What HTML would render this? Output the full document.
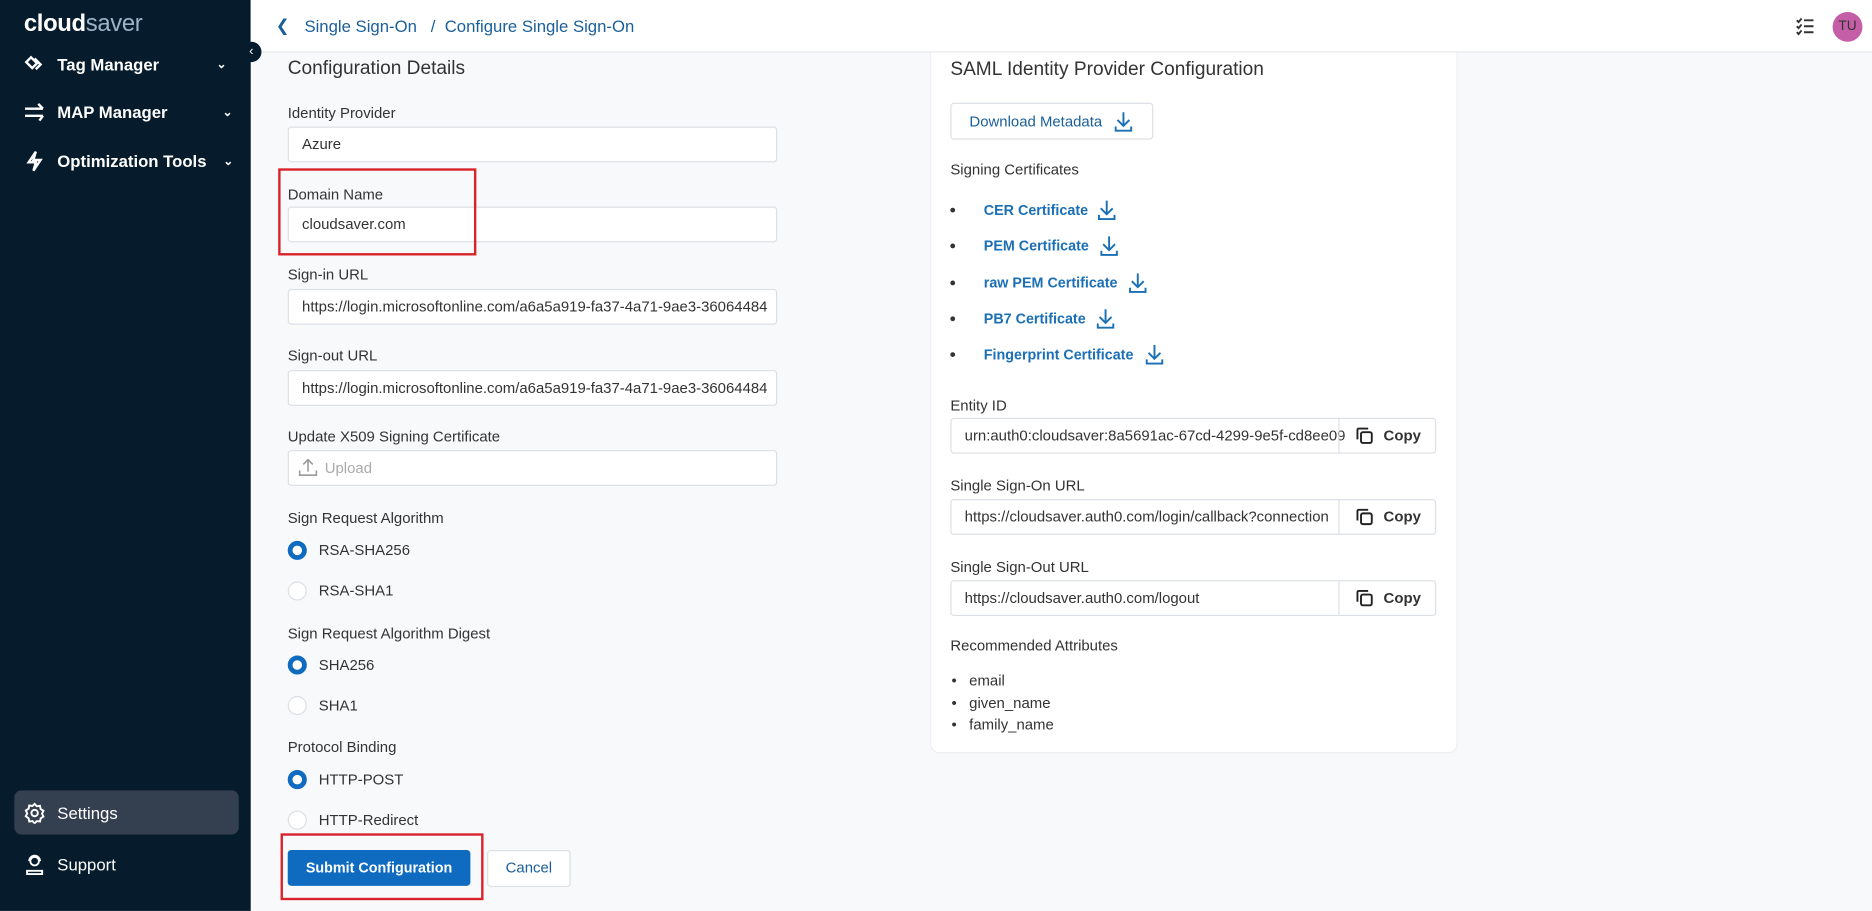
<!DOCTYPE html>
<html><head><meta charset="utf-8"><style>
*{box-sizing:border-box;margin:0;padding:0}
html,body{width:1872px;height:910px;overflow:hidden;background:#f8f9fb}
#w{position:absolute;left:0;top:0;width:1568px;height:763px;transform:scale(1.19388);transform-origin:0 0;font-family:"Liberation Sans",sans-serif;color:#333;background:#f8f9fb}
.a{position:absolute}
.sb{left:0;top:0;width:210px;height:763px;background:#061c2c;color:#fff}
.nav{position:absolute;left:20px;font-size:14px;font-weight:bold;display:flex;align-items:center;gap:10px}
.hdr{left:210px;top:0;width:1358px;height:44px;background:#fff;border-bottom:1px solid #e6e8ec}
.lbl{position:absolute;font-size:12.5px;color:#333}
.inp{position:absolute;height:30px;background:#fff;border:1px solid #dcdfe4;border-radius:3px;font-size:12.5px;color:#333;padding:0 11px;line-height:28px;white-space:nowrap;overflow:hidden}
.rad{position:absolute;left:241px;font-size:12.5px;display:flex;align-items:center;gap:10px}
.rad i{display:inline-block;width:16px;height:16px;border-radius:50%;border:1px solid #dcdfe4;background:#fff}
.rad i.on{border:4.5px solid #0e6bbf}
.card{left:779px;top:44px;width:442px;height:587px;background:#fff;border:1px solid #eceef1;border-top:none;border-radius:0 0 8px 8px}
.lnk{color:#1a6fb5;font-size:12px;font-weight:bold}
.cert{position:absolute;left:796px;display:flex;align-items:center;font-size:12.5px}
.cert b.dot{width:4px;height:4px;border-radius:50%;background:#333;margin-right:24px;display:inline-block}
.cp{position:absolute;left:1121px;width:82px;height:30px;border-left:1px solid #dcdfe4;display:flex;align-items:center;justify-content:center;gap:8px;font-size:12.5px;font-weight:bold;color:#333}
</style></head><body><div id="w">
<div class="a sb">
 <div class="a" style="left:20px;top:9px;font-size:20px;letter-spacing:-0.3px"><b>cloud</b><span style="color:#9fb3c8;font-weight:normal">saver</span></div>
 <div class="nav" style="top:46px"><svg width="18" height="16" viewBox="0 0 18 16" fill="none" stroke="#fff" stroke-width="2"><path d="M2 6l4-4 5 5-4 4z"/><path d="M9 3l5 5-4 4"/></svg>Tag Manager<span style="margin-left:38px;font-size:10px">&#8964;</span></div>
 <div class="nav" style="top:86px"><svg width="18" height="16" viewBox="0 0 18 16" fill="none" stroke="#fff" stroke-width="2"><path d="M1 5h15M12 1l4 4M1 11h15M13 15l3-4"/></svg>MAP Manager<span style="margin-left:36px;font-size:10px">&#8964;</span></div>
 <div class="nav" style="top:126px"><svg width="18" height="18" viewBox="0 0 18 18" fill="none" stroke="#fff" stroke-width="2"><path d="M10 1L4 10h6l-2 7 6-9H8z"/></svg>Optimization Tools<span style="margin-left:4px;font-size:10px">&#8964;</span></div>
 <div class="a" style="left:12px;top:662px;width:188px;height:37px;background:#343f50;border-radius:6px"></div>
 <div class="nav" style="top:672px;font-weight:normal"><svg width="18" height="18" viewBox="0 0 20 20" fill="none" stroke="#fff" stroke-width="1.8"><circle cx="10" cy="10" r="3"/><path d="M10 1.5l2 2.2 3-.4.6 3 2.6 1.6-1.3 2.7 1.3 2.7-2.6 1.6-.6 3-3-.4-2 2.2-2-2.2-3 .4-.6-3L1.8 13l1.3-2.7L1.8 7.6l2.6-1.6.6-3 3 .4z"/></svg>Settings</div>
 <div class="nav" style="top:715px;font-weight:normal"><svg width="18" height="18" viewBox="0 0 20 20" fill="none" stroke="#fff" stroke-width="1.8"><circle cx="10" cy="7" r="4"/><path d="M3 19v-3h14v3zM5 7a5 5 0 0110 0"/></svg>Support</div>
</div>
<div class="a hdr">
 <div class="a" style="left:21px;top:13px;font-size:14px;color:#1a5f99">&#10094;</div>
 <div class="a" style="left:45px;top:14px;font-size:14px;color:#1a5f99">Single Sign-On &nbsp; / &nbsp;Configure Single Sign-On</div>
 <svg class="a" style="left:1294px;top:14px" width="16" height="16" viewBox="0 0 16 16" fill="none" stroke="#333" stroke-width="1.6"><path d="M1 3l1.5 1.5L5 1.5M1 8l1.5 1.5L5 6.5M1 13l1.5 1.5L5 11.5M7 3h8M7 8h8M7 13h8"/></svg>
 <div class="a" style="left:1325px;top:10px;width:25px;height:25px;border-radius:50%;background:#c45ea6;color:#333;font-size:11.5px;text-align:center;line-height:25px">TU</div>
</div>
<div class="a" style="left:202px;top:35px;width:17px;height:17px;border-radius:50%;background:#061c2c;color:#fff;font-size:11px;text-align:center;line-height:16px">&#8249;</div>

<div class="a" style="left:241px;top:49px;font-size:16px;color:#333">Configuration Details</div>
<div class="lbl" style="left:241px;top:88px">Identity Provider</div>
<div class="inp" style="left:241px;top:106px;width:410px">Azure</div>
<div class="lbl" style="left:241px;top:156px">Domain Name</div>
<div class="inp" style="left:241px;top:173px;width:410px">cloudsaver.com</div>
<div class="a" style="left:233px;top:141px;width:166px;height:73px;border:2px solid #d8232a"></div>
<div class="lbl" style="left:241px;top:223px">Sign-in URL</div>
<div class="inp" style="left:241px;top:242px;width:410px">https://login.microsoftonline.com/a6a5a919-fa37-4a71-9ae3-36064484</div>
<div class="lbl" style="left:241px;top:291px">Sign-out URL</div>
<div class="inp" style="left:241px;top:310px;width:410px">https://login.microsoftonline.com/a6a5a919-fa37-4a71-9ae3-36064484</div>
<div class="lbl" style="left:241px;top:359px">Update X509 Signing Certificate</div>
<div class="inp" style="left:241px;top:377px;width:410px;color:#aaa;padding-left:8px"><svg width="16" height="16" viewBox="0 0 16 16" fill="none" stroke="#999" stroke-width="1.3" style="vertical-align:-3px;margin-right:6px"><path d="M8 12V2M4 6l4-4 4 4M1 11v4h14v-4"/></svg>Upload</div>
<div class="lbl" style="left:241px;top:427px">Sign Request Algorithm</div>
<div class="rad" style="top:453px"><i class="on"></i>RSA-SHA256</div>
<div class="rad" style="top:487px"><i></i>RSA-SHA1</div>
<div class="lbl" style="left:241px;top:524px">Sign Request Algorithm Digest</div>
<div class="rad" style="top:549px"><i class="on"></i>SHA256</div>
<div class="rad" style="top:583px"><i></i>SHA1</div>
<div class="lbl" style="left:241px;top:619px">Protocol Binding</div>
<div class="rad" style="top:645px"><i class="on"></i>HTTP-POST</div>
<div class="rad" style="top:679px"><i></i>HTTP-Redirect</div>
<div class="a" style="left:235px;top:698px;width:170px;height:56px;border:2px solid #d8232a"></div>
<div class="a" style="left:241px;top:712px;width:153px;height:30px;background:#0e6bbf;border-radius:3px;color:#fff;font-size:12px;font-weight:bold;text-align:center;line-height:30px">Submit Configuration</div>
<div class="a" style="left:408px;top:712px;width:70px;height:31px;background:#fff;border:1px solid #dcdfe4;border-radius:3px;color:#1a5f99;font-size:12.5px;text-align:center;line-height:29px">Cancel</div>

<div class="a card"></div>
<div class="a" style="left:796px;top:50px;font-size:16px;color:#333">SAML Identity Provider Configuration</div>
<div class="a" style="left:796px;top:86px;width:170px;height:31px;border:1px solid #dcdfe4;border-radius:3px;background:#fff;display:flex;align-items:center;padding-left:15px;gap:10px"><span style="font-size:12.5px;color:#1a5f99">Download Metadata</span><svg width="16" height="18" viewBox="0 0 16 18" fill="none" stroke="#1a6fb5" stroke-width="1.6"><path d="M8 1v11M3 7.5l5 5 5-5M1.5 13v3.5h13V13"/></svg></div>
<div class="lbl" style="left:796px;top:135px">Signing Certificates</div>
<div class="cert" style="top:167px"><b class="dot"></b><span class="lnk">CER Certificate</span><svg style="margin-left:8px" width="16" height="18" viewBox="0 0 16 18" fill="none" stroke="#1a6fb5" stroke-width="1.6"><path d="M8 1v11M3 7.5l5 5 5-5M1.5 13v3.5h13V13"/></svg></div>
<div class="cert" style="top:197px"><b class="dot"></b><span class="lnk">PEM Certificate</span><svg style="margin-left:9px" width="16" height="18" viewBox="0 0 16 18" fill="none" stroke="#1a6fb5" stroke-width="1.6"><path d="M8 1v11M3 7.5l5 5 5-5M1.5 13v3.5h13V13"/></svg></div>
<div class="cert" style="top:228px"><b class="dot"></b><span class="lnk">raw PEM Certificate</span><svg style="margin-left:9px" width="16" height="18" viewBox="0 0 16 18" fill="none" stroke="#1a6fb5" stroke-width="1.6"><path d="M8 1v11M3 7.5l5 5 5-5M1.5 13v3.5h13V13"/></svg></div>
<div class="cert" style="top:258px"><b class="dot"></b><span class="lnk">PB7 Certificate</span><svg style="margin-left:9px" width="16" height="18" viewBox="0 0 16 18" fill="none" stroke="#1a6fb5" stroke-width="1.6"><path d="M8 1v11M3 7.5l5 5 5-5M1.5 13v3.5h13V13"/></svg></div>
<div class="cert" style="top:288px"><b class="dot"></b><span class="lnk">Fingerprint Certificate</span><svg style="margin-left:10px" width="16" height="18" viewBox="0 0 16 18" fill="none" stroke="#1a6fb5" stroke-width="1.6"><path d="M8 1v11M3 7.5l5 5 5-5M1.5 13v3.5h13V13"/></svg></div>

<div class="lbl" style="left:796px;top:333px">Entity ID</div>
<div class="inp" style="left:796px;top:350px;width:407px;padding-right:90px">urn:auth0:cloudsaver:8a5691ac-67cd-4299-9e5f-cd8ee09</div>
<div class="cp" style="top:350px"><svg width="16" height="16" viewBox="0 0 16 16" fill="none" stroke="#222" stroke-width="1.6"><rect x="5" y="5" width="9" height="9" rx="1.5"/><path d="M2 11V3a1 1 0 011-1h8"/></svg>Copy</div>
<div class="lbl" style="left:796px;top:400px">Single Sign-On URL</div>
<div class="inp" style="left:796px;top:418px;width:407px;padding-right:90px">https://cloudsaver.auth0.com/login/callback?connection</div>
<div class="cp" style="top:418px"><svg width="16" height="16" viewBox="0 0 16 16" fill="none" stroke="#222" stroke-width="1.6"><rect x="5" y="5" width="9" height="9" rx="1.5"/><path d="M2 11V3a1 1 0 011-1h8"/></svg>Copy</div>
<div class="lbl" style="left:796px;top:468px">Single Sign-Out URL</div>
<div class="inp" style="left:796px;top:486px;width:407px">https://cloudsaver.auth0.com/logout</div>
<div class="cp" style="top:486px"><svg width="16" height="16" viewBox="0 0 16 16" fill="none" stroke="#222" stroke-width="1.6"><rect x="5" y="5" width="9" height="9" rx="1.5"/><path d="M2 11V3a1 1 0 011-1h8"/></svg>Copy</div>
<div class="lbl" style="left:796px;top:534px">Recommended Attributes</div>
<div class="lbl" style="left:797px;top:561px;line-height:18.5px">&bull;&nbsp;&nbsp;&nbsp;email<br>&bull;&nbsp;&nbsp;&nbsp;given_name<br>&bull;&nbsp;&nbsp;&nbsp;family_name</div>
</div></body></html>
